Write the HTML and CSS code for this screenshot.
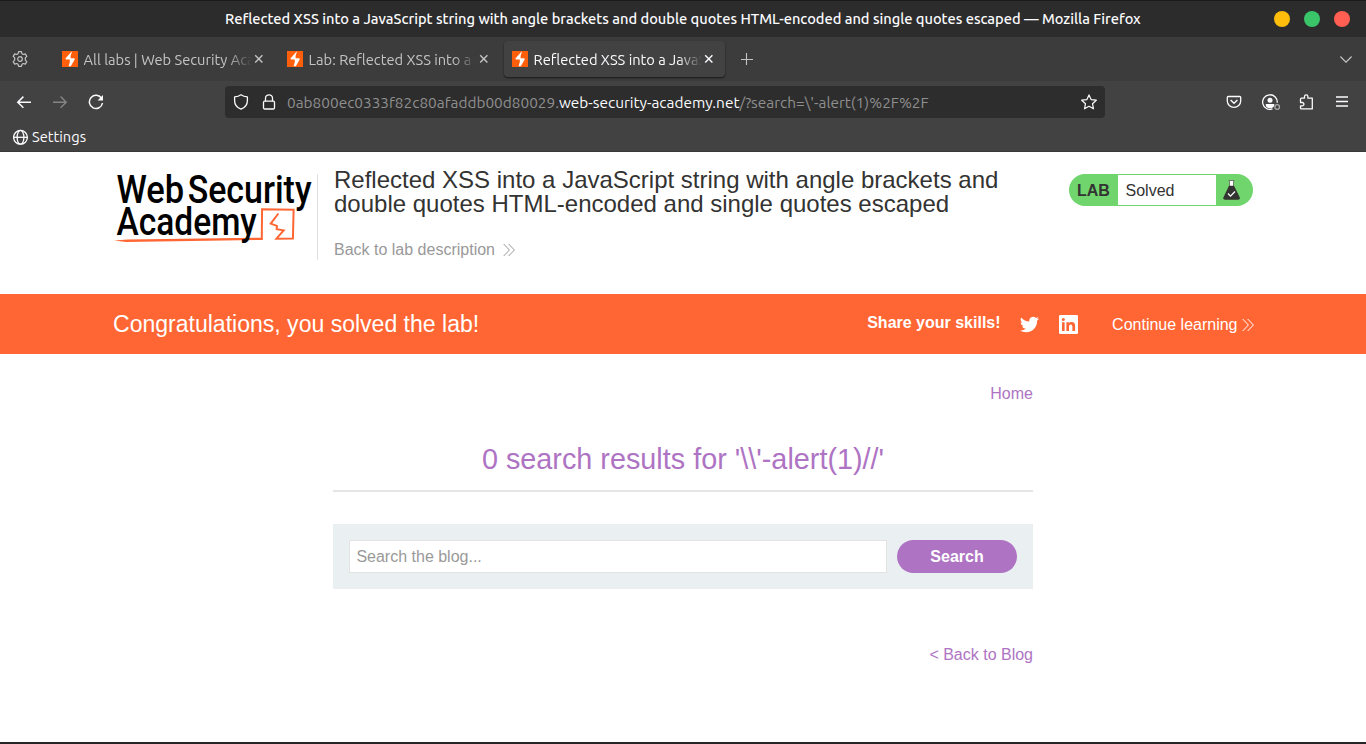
FILE: index.html
```html
<!DOCTYPE html>
<html lang="en">
<head>
<meta charset="utf-8">
<title>Reflected XSS into a JavaScript string</title>
<link rel="stylesheet" href="styles.css">
</head>
<body>
<svg class="defs" width="0" height="0">
  <symbol id="bolt" viewBox="0 0 16 16"><rect width="16" height="16" fill="#ff5f0a"/><path d="M9.400 0.700 3.400 7.400 4 8.600H7.800V11L6.600 15.300H8.800L12.800 8.200 12.300 7.200H8.600V5L9.900 .7Z" fill="#fff"/></symbol>
  <symbol id="close" viewBox="0 0 10 10"><path d="M1.2 1.2 8.4 8.4M8.4 1.2 1.2 8.4" fill="none" stroke="currentColor" stroke-width="1.4"/></symbol>
  <symbol id="chevrons" viewBox="0 0 12 14"><path d="M.7 1 6.4 7 .7 13M5.7 1 11.4 7 5.7 13" fill="none" stroke="currentColor" stroke-width="1"/></symbol>
</svg>
<header class="browser">
  <div class="titlebar">
    <span class="window-title">Reflected XSS into a JavaScript string with angle brackets and double quotes HTML-encoded and single quotes escaped — Mozilla Firefox</span>
    <div class="window-buttons"><i class="dot yellow"></i><i class="dot green"></i><i class="dot red"></i></div>
  </div>
  <div class="tabstrip">
    <svg class="gear" viewBox="0 0 16 16" fill="none" stroke="currentColor" stroke-width="1.2" stroke-linejoin="round"><circle cx="8" cy="8" r="2.3"/><path d="M6.600.7h2.800l.6 2.100 1.200.7 2.100-.6 1.500 2.500-1.500 1.500v2.200l1.500 1.500-1.500 2.500-2.100-.6-1.200.7-.6 2.100H6.600L6 13.200l-1.200-.7-2.100.6-1.500-2.500 1.500-1.500V6.900L1.200 5.400l1.500-2.500 2.100.6L6 2.800Z"/></svg>
    <div class="tabs">
      <div class="tab"><svg class="favicon"><use href="#bolt"/></svg><span class="tab-label">All labs | Web Security Aca</span><svg class="close"><use href="#close"/></svg></div>
      <div class="tab"><svg class="favicon"><use href="#bolt"/></svg><span class="tab-label">Lab: Reflected XSS into a J</span><svg class="close"><use href="#close"/></svg></div>
      <div class="tab active"><svg class="favicon"><use href="#bolt"/></svg><span class="tab-label">Reflected XSS into a JavaS</span><svg class="close"><use href="#close"/></svg></div>
    </div>
    <svg class="plus" viewBox="0 0 12 12"><path d="M5.500 0v12M0 6.500h12" stroke="currentColor" stroke-width="1.100"/></svg>
    <svg class="all-tabs" viewBox="0 0 12 7" fill="none" stroke="currentColor" stroke-width="1.2"><path d="M.4.5 6 6.1 11.6.5"/></svg>
  </div>
  <div class="navbar">
    <div class="nav-buttons">
      <svg class="icon" viewBox="0 0 16 16" fill="none" stroke="currentColor" stroke-width="1.5"><path d="M15 8.2H1.8M7.4 2.6 1.8 8.2l5.6 5.6"/></svg>
      <svg class="icon dim" viewBox="0 0 16 16" fill="none" stroke="currentColor" stroke-width="1.4"><path d="M1 8.2h13.2M8.6 2.6l5.6 5.6-5.6 5.6"/></svg>
      <svg class="icon" viewBox="0 0 16 16" fill="none" stroke="currentColor" stroke-width="1.5"><path d="M13.700 4.600A6.600 6.600 0 1 0 14.500 9"/><path d="M15 1v5.400H9.600Z" fill="currentColor" stroke="none"/></svg>
    </div>
    <div class="urlbar">
      <svg class="icon" viewBox="0 0 16 16" fill="none" stroke="currentColor" stroke-width="1.3" stroke-linejoin="round"><path d="M8 .8c2 1.500 4.200 2 6.400 2.100v3.600C14.400 10.400 12 13.700 8 15.200 4 13.700 1.600 10.400 1.600 6.500V2.900C3.800 2.800 6 2.300 8 .8Z"/></svg>
      <svg class="icon lock" viewBox="0 0 16 16" fill="none" stroke="currentColor" stroke-width="1.3"><rect x="2.500" y="7.200" width="11" height="7.800" rx="1.200"/><path d="M4.500 7.200V4.300a3.500 3.500 0 0 1 7 0v2.900"/></svg>
      <span class="url">0ab800ec0333f82c80afaddb00d80029.<span class="host">web-security-academy.net</span>/?search=\'-alert(1)%2F%2F</span>
      <svg class="icon star" viewBox="0 0 16 16" fill="none" stroke="currentColor" stroke-width="1.2" stroke-linejoin="round"><path d="m8 .9 2.100 4.700 5.200.6-3.800 3.500 1 5.100L8 12.300l-4.500 2.500 1-5.100L.7 6.200l5.200-.6Z"/></svg>
    </div>
    <div class="tools">
      <svg class="icon" viewBox="0 0 16 16" fill="none" stroke="currentColor" stroke-width="1.300"><path d="M2.200 2.500h11.600q.9 0 .9.900v3.700a6.700 6.300 0 0 1-13.400 0V3.400q0-.9.900-.9Z"/><path d="M4.600 6 8 9.200 11.400 6" stroke-width="1.500"/></svg>
      <svg class="icon account" viewBox="0 0 19 16" fill="none" stroke="currentColor" stroke-width="1.300"><path d="M15.200 8.800A7.300 7.300 0 1 0 10.500 14.900"/><circle cx="8" cy="6.200" r="2.500" fill="currentColor" stroke="none"/><path d="M3.600 10h8.800l-.6 2.700Q8 16 4.200 12.700Z" fill="currentColor" stroke="none"/><circle cx="15.200" cy="13" r="2.300" stroke="#aaa"/></svg>
      <svg class="icon" viewBox="0 0 16 16" fill="none" stroke="currentColor" stroke-width="1.300" stroke-linejoin="round"><path d="M2.500 7.700V5.200q0-1 1-1h3V2.500a1.700 1.700 0 0 1 3.400 0v1.700h4.400v10.700H3.500q-1 0-1-1v-2h1.700a1.700 1.700 0 0 0 0-3.400H2.500Z"/></svg>
      <svg class="icon" viewBox="0 0 16 16" fill="none" stroke="currentColor" stroke-width="1.300"><path d="M2 3h12M2 7.500h12M2 12h12"/></svg>
    </div>
  </div>
  <div class="bookmarks">
    <svg class="icon" viewBox="0 0 16 16" fill="none" stroke="currentColor" stroke-width="1.300"><circle cx="7.500" cy="8.300" r="6.900"/><ellipse cx="7.500" cy="8.300" rx="3.400" ry="6.900"/><path d="M.6 8.300h13.800"/></svg>
    <span class="bookmark-name">Settings</span>
  </div>
</header>

<section class="lab-header">
  <svg class="logo" viewBox="0 0 204 86">
    <path d="M148.500 66 148.800 35.200 180.500 35.800 179.800 64.600 163.200 64.800 170.500 56.400 163.500 55.200 163.700 51.900 157.500 49.600 165.200 39.500" fill="none" stroke="#ff6633" stroke-width="2"/>
    <path d="M0 66.500 14 65.600 149 63.800V66L12 68.200Z" fill="#ff6633"/>
    <g class="logo-text">
      <text x="2.500" y="28.500" textLength="68" lengthAdjust="spacingAndGlyphs">Web</text>
      <text x="74" y="28.500" textLength="124.500" lengthAdjust="spacingAndGlyphs">Security</text>
      <text x="2.500" y="61" textLength="141" lengthAdjust="spacingAndGlyphs">Academy</text>
    </g>
  </svg>
  <div class="lab-title">
    <h2>Reflected XSS into a JavaScript string with angle brackets and double quotes HTML-encoded and single quotes escaped</h2>
    <a class="back-link">Back to lab description <svg class="chevrons"><use href="#chevrons"/></svg></a>
  </div>
  <div class="lab-status">
    <b>LAB</b><span>Solved</span>
    <svg class="flask" viewBox="0 0 18 22"><path d="M6.500 2h4v5h-4Z" fill="#fff"/><path d="M5.500 1.500h6M6.500 2v5M10.500 2v5" stroke="#666" stroke-width=".8"/><path d="M6 6.800h5L16.600 18q1 2.700-1.600 2.700H2Q-.4 20.700.6 18Z" fill="#333332"/><path d="m5 14.500 2.500 2.600 4.500-4.600" fill="none" stroke="#fff" stroke-width="1.300"/></svg>
  </div>
</section>

<section class="banner">
  <span class="congrats">Congratulations, you solved the lab!</span>
  <div class="share">
    <b>Share your skills!</b>
    <svg class="social twitter" viewBox="0 2 24 20" fill="#fff"><path d="M23.950 4.570a10 10 0 0 1-2.820.77 4.960 4.960 0 0 0 2.160-2.720 9.900 9.900 0 0 1-3.120 1.190 4.920 4.920 0 0 0-8.380 4.480A13.930 13.930 0 0 1 1.640 3.160a4.920 4.920 0 0 0 1.520 6.570 4.900 4.900 0 0 1-2.230-.61v.06a4.920 4.920 0 0 0 3.950 4.830 5 5 0 0 1-2.210.08 4.940 4.940 0 0 0 4.600 3.420A9.870 9.870 0 0 1 0 19.540a14 14 0 0 0 7.550 2.210c9.050 0 14-7.500 14-13.980 0-.21 0-.42-.02-.63a9.940 9.940 0 0 0 2.460-2.550Z"/></svg>
    <svg class="social linkedin" viewBox="0 0 19 19"><rect width="19" height="19" rx="1.300" fill="#fff"/><path d="M3 7.300h2.600V16H3ZM7.400 7.300h2.500v1.200c.5-.9 1.400-1.400 2.600-1.400 2.700 0 3.600 1.500 3.600 4.100V16h-2.700v-4.300c0-1.300-.3-2.300-1.600-2.300-1.400 0-1.800 1-1.800 2.200V16H7.400Z" fill="#ff6633"/><circle cx="4.300" cy="4.500" r="1.500" fill="#ff6633"/></svg>
    <a class="continue">Continue learning <svg class="chevrons"><use href="#chevrons"/></svg></a>
  </div>
</section>

<main class="content">
  <nav class="home"><a>Home</a></nav>
  <h1>0 search results for '\\'-alert(1)//'</h1>
  <form class="search"><input type="text" placeholder="Search the blog..."><button type="button">Search</button></form>
  <div class="back-blog"><a>&lt; Back to Blog</a></div>
</main>
<footer class="screen-edge"></footer>
</body>
</html>
```
FILE: styles.css
```css
* { box-sizing: border-box; }
body { margin: 0; height: 744px; overflow: hidden; display: flex; flex-direction: column; background: #fff; color: #333332; font: 16px "Liberation Sans", Arial, sans-serif; }
.defs { position: absolute; }
.browser { height: 152px; flex: none; background: #424242; border-bottom: 1px solid #383838; color: #fbfbfe; font: 14.667px/18px Ubuntu, "Noto Sans", sans-serif; }
svg { display: block; flex: none; }

.titlebar { height: 37px; display: flex; align-items: center; background: #2c2c2c; border-top: 1px solid #1c1c1c; padding: 0 16px 0 225px; }
.window-title { width: 930px; white-space: nowrap; font-weight: 500; letter-spacing: -0.018px; }
.window-buttons { margin-left: auto; display: flex; gap: 14px; }
.dot { width: 16px; height: 16px; border-radius: 50%; }
.yellow { background: #ffbe0b; }
.green { background: #3ac569; }
.red { background: #ff5f52; }

.tabstrip { height: 44px; display: flex; align-items: center; background: #3c3c3c; color: #c4c4c4; padding: 0 14px 0 12px; }
.gear { width: 16px; height: 16px; }
.tabs { display: flex; gap: 4px; margin-left: 26px; }
.tab { width: 221px; height: 36px; display: flex; align-items: center; padding-left: 8px; border-radius: 4px; }
.active { background: #424242; color: #fbfbfe; box-shadow: 0 1px 2px rgba(0, 0, 0, .6); }
.favicon { width: 16px; height: 16px; }
.tab-label { width: 168px; margin-left: 5.6px; margin-top: 2px; overflow: hidden; white-space: nowrap; -webkit-mask-image: linear-gradient(to left, transparent, #000 24px); mask-image: linear-gradient(to left, transparent, #000 24px); }
.close { width: 10px; height: 10px; margin-left: 2.4px; }
.plus { width: 12px; height: 12px; margin-left: 16px; }
.all-tabs { width: 12px; height: 7px; margin-left: auto; }

.navbar { height: 41px; display: flex; align-items: center; padding: 1px 14px 0 16px; }
.icon { width: 16px; height: 16px; }
.nav-buttons { display: flex; flex: none; gap: 20px; width: 209px; }
.dim { color: #858585; }
.urlbar { width: 880px; height: 32px; flex: none; display: flex; align-items: center; padding: 0 8px; border-radius: 4px; background: #2d2d2d; }
.lock { margin-left: 12px; }
.url { margin: 2px 0 0 10px; white-space: nowrap; font-size: 15.4px; color: #8f8f8f; }
.host { color: #fbfbfe; }
.star { margin-left: auto; }
.tools { display: flex; gap: 20px; margin-left: 121px; }
.account { width: 19px; margin-right: -3px; }
.bookmarks { height: 29px; display: flex; align-items: center; gap: 3px; padding-left: 13px; }

.lab-header { height: 142px; flex: none; display: flex; align-items: flex-start; padding: 22px 113px 0 114px; }
.logo { width: 204px; height: 86px; border-right: 1px solid #e0e0e0; }
.logo-text { font: 500 39px Roboto, sans-serif; fill: #000; }
.lab-title { margin: -6px 0 0 16px; width: 700px; }
h2 { margin: 0; font-size: 24px; line-height: 24px; font-weight: 400; }
.back-link { display: flex; align-items: center; gap: 8.5px; margin-top: 25px; line-height: 18px; color: #999; }
.chevrons { width: 12px; height: 14px; }
.lab-status { margin-left: auto; width: 184px; height: 32px; display: flex; align-items: center; border-radius: 16px; background: #70d56d; }
.lab-status b { width: 49px; padding: 2px 0 0 8px; }
.lab-status span { width: 98px; height: 30px; padding-left: 7.5px; line-height: 31px; background: #fff; }
.flask { width: 18px; height: 22px; margin-left: 6.5px; }

.banner { height: 60px; flex: none; display: flex; align-items: center; justify-content: space-between; padding: 0 112px 0 113px; background: #ff6633; color: #fff; }
.congrats { font-size: 23.040px; }
.share { display: flex; align-items: center; }
.share b { margin-top: -3px; }
.twitter { width: 19px; height: 17px; margin-left: 19px; }
.linkedin { width: 19px; height: 19px; margin-left: 20px; }
.continue { display: flex; align-items: center; gap: 4.5px; margin: 1px 0 0 34.500px; }

.content { width: 700px; margin: 0 auto; color: #ae74c3; }
.home { margin-top: 31px; text-align: right; line-height: 18px; }
h1 { margin: 36px 0 0; height: 53px; border-bottom: 2px solid #e5e5e5; text-align: center; font-size: 28.800px; line-height: 40px; font-weight: 400; }
.search { display: flex; gap: 10px; margin: 32px 0 0; height: 65px; padding: 16px; background: #eaeff2; }
.search input { width: 538px; height: 33px; padding: 0 6.4px; border: 1px solid #e3e3e3; font: inherit; background: #fff; }
.search input::placeholder { color: #999; opacity: 1; }
.search button { width: 120px; height: 33px; border: 0; border-radius: 17px; background: #ae74c3; color: #fff; font: bold 16px "Liberation Sans", Arial, sans-serif; }
.back-blog { margin-top: 57px; text-align: right; line-height: 18px; }
.screen-edge { height: 2px; margin-top: auto; flex: none; background: #262626; }
```
